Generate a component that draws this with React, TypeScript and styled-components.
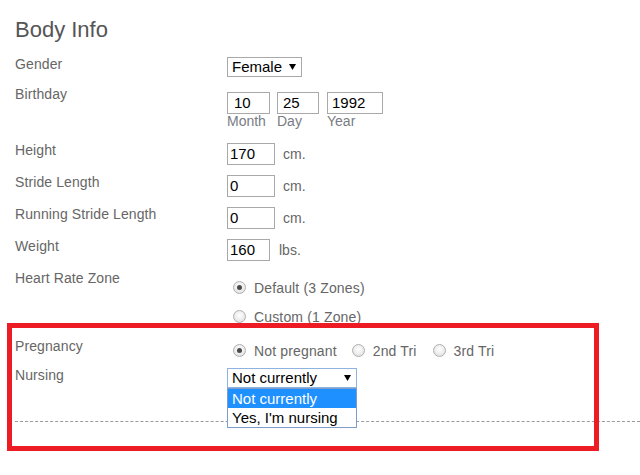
import React from "react";
import styled, { createGlobalStyle } from "styled-components";

const GlobalStyle = createGlobalStyle`
  html, body { margin: 0; padding: 0; background: #fff; overflow: hidden; }
  body { font-family: "Liberation Sans", Arial, sans-serif; }
  * { box-sizing: border-box; }
`;

const Page = styled.div`
  position: relative;
  width: 640px;
  height: 475px;
  padding: 17px 0 0 15px;
`;

const Title = styled.h2`
  margin: 0 0 14px 0;
  font-size: 22px;
  line-height: 25px;
  font-weight: normal;
  color: #555;
`;

const Row = styled.div<{ $h: number }>`
  display: grid;
  grid-template-columns: 212px 1fr;
  height: ${(p) => p.$h}px;
`;

const Label = styled.div`
  font-size: 14px;
  line-height: 17px;
  letter-spacing: 0.1px;
  color: #666;
`;

const Control = styled.div<{ $top: number }>`
  display: flex;
  align-items: flex-start;
  padding-top: ${(p) => p.$top}px;
`;

const Inline = styled.div`
  display: flex;
  align-items: center;
`;

const TextBox = styled.div<{ $w: number; $pl?: number }>`
  width: ${(p) => p.$w}px;
  height: 22px;
  border: 1px solid #a9a9a9;
  background: #fff;
  padding-left: ${(p) => p.$pl ?? 2}px;
  font-size: 15px;
  line-height: 20px;
  color: #000;
`;

const Unit = styled.span<{ $ml: number }>`
  margin-left: ${(p) => p.$ml}px;
  font-size: 14px;
  color: #666;
`;

const DateFields = styled.div`
  display: flex;
`;

const DateField = styled.div<{ $mr: number }>`
  display: flex;
  flex-direction: column;
  margin-right: ${(p) => p.$mr}px;
`;

const SubLabel = styled.span`
  font-size: 14px;
  line-height: 14px;
  color: #787c84;
`;

const SelectBox = styled.div<{ $w: number; $focus?: boolean }>`
  position: relative;
  width: ${(p) => p.$w}px;
  height: 20px;
  border: 1px solid ${(p) => (p.$focus ? "#8fb3e0" : "#a9a9a9")};
  background: #fff;
  display: flex;
  align-items: center;
  justify-content: space-between;
  padding: 0 5px 1px 4px;
  font-size: 15px;
  color: #000;
`;

const Arrow = () => (
  <svg width="7" height="6" viewBox="0 0 7 6">
    <polygon points="0,0 7,0 3.5,6" fill="#000" />
  </svg>
);

const Menu = styled.div`
  position: absolute;
  left: -1px;
  top: 19px;
  width: 130px;
  border: 1px solid #7f9bc9;
  background: #fff;
  z-index: 2;
`;

const Option = styled.div<{ $active?: boolean }>`
  height: 19px;
  line-height: 19px;
  padding-left: 4px;
  font-size: 15px;
  background: ${(p) => (p.$active ? "#1e90ff" : "#fff")};
  color: ${(p) => (p.$active ? "#fff" : "#000")};
`;

const RadioStack = styled.div`
  display: flex;
  flex-direction: column;
  gap: 12px;
`;

const RadioGroup = styled.div`
  display: flex;
  align-items: center;
`;

const RadioOption = styled.label<{ $mr?: number }>`
  display: flex;
  align-items: center;
  height: 17px;
  margin-right: ${(p) => p.$mr ?? 0}px;
  font-size: 14px;
  letter-spacing: 0.15px;
  color: #666;
`;

const RadioDot = styled.span<{ $on?: boolean }>`
  width: 13px;
  height: 13px;
  margin: 0 8px 0 6px;
  border-radius: 50%;
  border: 1px solid #b0b0b0;
  background: radial-gradient(circle at 50% 40%, #ffffff 0%, #ececec 55%, #d4d4d4 100%);
  display: flex;
  align-items: center;
  justify-content: center;
  &::after {
    content: "";
    display: ${(p) => (p.$on ? "block" : "none")};
    width: 5px;
    height: 5px;
    border-radius: 50%;
    background: #4a4a4a;
  }
`;

const Divider = styled.div`
  border-top: 1px dashed #9a9a9a;
`;

const Highlight = styled.div`
  position: absolute;
  left: 7px;
  top: 323px;
  width: 592px;
  height: 128px;
  border: 5px solid #ed1c24;
  pointer-events: none;
`;

const Radio: React.FC<{ on?: boolean; mr?: number; children: React.ReactNode }> = ({ on, mr, children }) => (
  <RadioOption $mr={mr}>
    <RadioDot $on={on} />
    {children}
  </RadioOption>
);

export default function App() {
  return (
    <>
      <GlobalStyle />
      <Page>
        <Title>Body Info</Title>

        <Row $h={30}>
          <Label>Gender</Label>
          <Control $top={1}>
            <SelectBox $w={75}>
              <span>Female</span>
              <Arrow />
            </SelectBox>
          </Control>
        </Row>

        <Row $h={56}>
          <Label>Birthday</Label>
          <Control $top={6}>
            <DateFields>
              <DateField $mr={7}>
                <TextBox $w={43} $pl={6}>10</TextBox>
                <SubLabel>Month</SubLabel>
              </DateField>
              <DateField $mr={8}>
                <TextBox $w={42} $pl={5}>25</TextBox>
                <SubLabel>Day</SubLabel>
              </DateField>
              <DateField $mr={0}>
                <TextBox $w={56} $pl={4}>1992</TextBox>
                <SubLabel>Year</SubLabel>
              </DateField>
            </DateFields>
          </Control>
        </Row>

        <Row $h={32}>
          <Label>Height</Label>
          <Control $top={1}>
            <Inline>
              <TextBox $w={48}>170</TextBox>
              <Unit $ml={8}>cm.</Unit>
            </Inline>
          </Control>
        </Row>

        <Row $h={32}>
          <Label>Stride Length</Label>
          <Control $top={1}>
            <Inline>
              <TextBox $w={48}>0</TextBox>
              <Unit $ml={8}>cm.</Unit>
            </Inline>
          </Control>
        </Row>

        <Row $h={32}>
          <Label>Running Stride Length</Label>
          <Control $top={1}>
            <Inline>
              <TextBox $w={48}>0</TextBox>
              <Unit $ml={8}>cm.</Unit>
            </Inline>
          </Control>
        </Row>

        <Row $h={32}>
          <Label>Weight</Label>
          <Control $top={1}>
            <Inline>
              <TextBox $w={43}>160</TextBox>
              <Unit $ml={9}>lbs.</Unit>
            </Inline>
          </Control>
        </Row>

        <Row $h={68}>
          <Label>Heart Rate Zone</Label>
          <Control $top={9}>
            <RadioStack>
              <Radio on>Default (3 Zones)</Radio>
              <Radio>Custom (1 Zone)</Radio>
            </RadioStack>
          </Control>
        </Row>

        <Row $h={29}>
          <Label>Pregnancy</Label>
          <Control $top={4}>
            <RadioGroup>
              <Radio on mr={9}>Not pregnant</Radio>
              <Radio mr={10}>2nd Tri</Radio>
              <Radio>3rd Tri</Radio>
            </RadioGroup>
          </Control>
        </Row>

        <Row $h={54}>
          <Label>Nursing</Label>
          <Control $top={1}>
            <SelectBox $w={130} $focus>
              <span>Not currently</span>
              <Arrow />
              <Menu>
                <Option $active>Not currently</Option>
                <Option>Yes, I'm nursing</Option>
              </Menu>
            </SelectBox>
          </Control>
        </Row>

        <Divider />
        <Highlight />
      </Page>
    </>
  );
}
